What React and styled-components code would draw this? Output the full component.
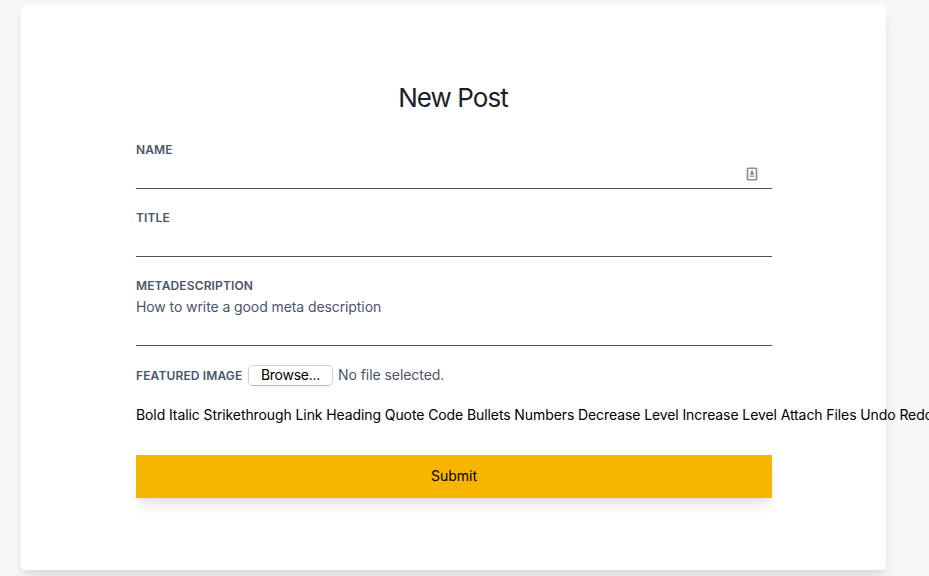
import React from "react";
import styled, { createGlobalStyle } from "styled-components";

const GlobalStyle = createGlobalStyle`
  *, *::before, *::after { box-sizing: border-box; }
  html, body { margin: 0; height: 576px; overflow: hidden; background: #f7f7f7; }
  body { font-family: Inter, "Liberation Sans", sans-serif; color: #4a5568; }
`;

const Page = styled.main`
  height: 576px;
  padding: 5px 43px 6px 21px;
`;

const Card = styled.form`
  height: 565px;
  padding: 75px 114px 0 115px;
  background: #fff;
  border-radius: 4px;
  box-shadow: 0 10px 15px -3px rgba(0, 0, 0, 0.1), 0 4px 6px -2px rgba(0, 0, 0, 0.05);
`;

const Heading = styled.h1`
  margin: 0;
  padding-right: 2px;
  height: 36px;
  line-height: 36px;
  text-align: center;
  font-size: 26px;
  font-weight: 400;
  letter-spacing: -0.95px;
  color: #1a202c;
`;

const Field = styled.div`
  display: flex;
  flex-direction: column;
  height: ${(p) => p.$height}px;
  margin-top: ${(p) => p.$gap}px;
  border-bottom: 1px solid #4a5568;
`;

const Label = styled.label`
  line-height: 18px;
  font-size: 12px;
  font-weight: 600;
  letter-spacing: 0.14px;
  text-transform: uppercase;
  white-space: nowrap;
`;

const Hint = styled.span`
  font-size: 14px;
  line-height: 24px;
  letter-spacing: -0.09px;
`;

const InputRow = styled.div`
  display: flex;
  justify-content: flex-end;
  padding: 8px 14px 0 0;
`;

const FileRow = styled.div`
  display: flex;
  align-items: center;
  height: 22px;
  margin-top: 18px;
`;

const FileLabel = styled(Label)`
  width: 107px;
  padding-top: 1px;
`;

const FileStatus = styled.span`
  font-size: 14px;
  line-height: 20px;
  letter-spacing: -0.06px;
`;

const Browse = styled.button`
  width: 85px;
  height: 21px;
  margin: 0 5px 0 5px;
  padding: 0 0 1px;
  border: 1px solid #cfcfcf;
  border-bottom-color: #b4b4b4;
  border-radius: 5px;
  background: #fff;
  font: 400 14px/18px Inter, sans-serif;
  letter-spacing: -0.25px;
  color: #000;
`;

const Toolbar = styled.div`
  margin-top: 19px;
  line-height: 20px;
  font-size: 14px;
  letter-spacing: -0.095px;
  white-space: nowrap;
  color: #000;
`;

const Submit = styled.button`
  display: block;
  width: 100%;
  height: 43px;
  margin-top: 30px;
  padding: 0 0 2px;
  border: 0;
  background: #f7b500;
  font: 400 14px Inter, sans-serif;
  color: #000;
  box-shadow: 0 10px 15px -3px rgba(0, 0, 0, 0.1), 0 4px 6px -2px rgba(0, 0, 0, 0.05);
`;

const tools = ["Bold", "Italic", "Strikethrough", "Link", "Heading", "Quote", "Code", "Bullets", "Numbers", "Decrease Level", "Increase Level", "Attach Files", "Undo", "Redo"];

function ContactIcon() {
  return (
    <svg width="12" height="14" viewBox="0 0 12 14" fill="none">
      <rect x="1.5" y="1.25" width="9" height="11.5" rx="0.6" stroke="#929292" strokeWidth="1.7" />
      <path d="M5 3.500H7V6H8V7.500H4V6H5Z" fill="#888" />
      <rect x="4" y="8.500" width="4" height="1.500" fill="#999" />
    </svg>
  );
}

export default function App() {
  return (
    <>
      <GlobalStyle />
      <Page>
        <Card>
          <Heading>New Post</Heading>
          <Field $height={48} $gap={25}>
            <Label>Name</Label>
            <InputRow><ContactIcon /></InputRow>
          </Field>
          <Field $height={48} $gap={20}>
            <Label>Title</Label>
          </Field>
          <Field $height={69} $gap={20}>
            <Label>Metadescription</Label>
            <Hint>How to write a good meta description</Hint>
          </Field>
          <FileRow>
            <FileLabel>Featured Image</FileLabel>
            <Browse type="button">Browse...</Browse>
            <FileStatus>No file selected.</FileStatus>
          </FileRow>
          <Toolbar>{tools.join(" ")}</Toolbar>
          <Submit type="button">Submit</Submit>
        </Card>
      </Page>
    </>
  );
}
